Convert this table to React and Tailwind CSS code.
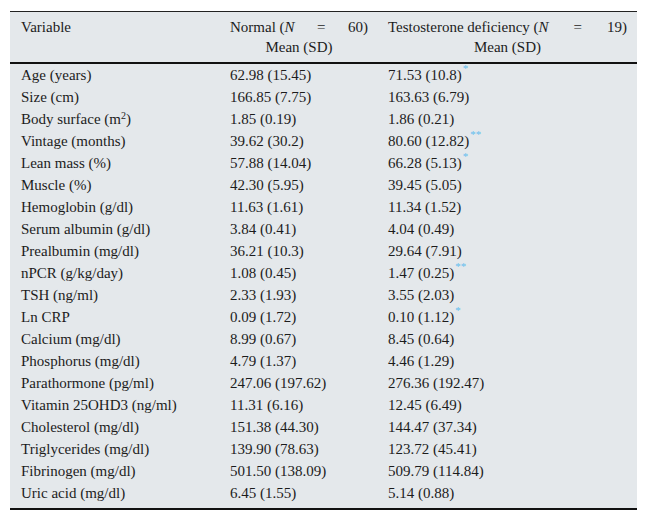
const rows = [
  ["Age (years)", "62.98 (15.45)", "71.53 (10.8)", "*"],
  ["Size (cm)", "166.85 (7.75)", "163.63 (6.79)"],
  [<>Body surface (m<sup className="text-[10px]">2</sup>)</>, "1.85 (0.19)", "1.86 (0.21)"],
  ["Vintage (months)", "39.62 (30.2)", "80.60 (12.82)", "**"],
  ["Lean mass (%)", "57.88 (14.04)", "66.28 (5.13)", "*"],
  ["Muscle (%)", "42.30 (5.95)", "39.45 (5.05)"],
  ["Hemoglobin (g/dl)", "11.63 (1.61)", "11.34 (1.52)"],
  ["Serum albumin (g/dl)", "3.84 (0.41)", "4.04 (0.49)"],
  ["Prealbumin (mg/dl)", "36.21 (10.3)", "29.64 (7.91)"],
  ["nPCR (g/kg/day)", "1.08 (0.45)", "1.47 (0.25)", "**"],
  ["TSH (ng/ml)", "2.33 (1.93)", "3.55 (2.03)"],
  ["Ln CRP", "0.09 (1.72)", "0.10 (1.12)", "*"],
  ["Calcium (mg/dl)", "8.99 (0.67)", "8.45 (0.64)"],
  ["Phosphorus (mg/dl)", "4.79 (1.37)", "4.46 (1.29)"],
  ["Parathormone (pg/ml)", "247.06 (197.62)", "276.36 (192.47)"],
  ["Vitamin 25OHD3 (ng/ml)", "11.31 (6.16)", "12.45 (6.49)"],
  ["Cholesterol (mg/dl)", "151.38 (44.30)", "144.47 (37.34)"],
  ["Triglycerides (mg/dl)", "139.90 (78.63)", "123.72 (45.41)"],
  ["Fibrinogen (mg/dl)", "501.50 (138.09)", "509.79 (114.84)"],
  ["Uric acid (mg/dl)", "6.45 (1.55)", "5.14 (0.88)"],
];

const HeaderGroup = ({ label, n }) => (
  <div className="flex flex-col">
    <div className="flex justify-between">
      <span>
        {label} (<i>N</i>
      </span>
      <span>=</span>
      <span>{n})</span>
    </div>
    <div className="text-center">Mean (SD)</div>
  </div>
);

export default function App() {
  return (
    <div className="w-[648px] h-[521px] bg-white pt-[11px] pl-[10px] font-['Liberation_Serif',serif] text-[15px] text-[#1c1c1c]">
      <div className="w-[627px] bg-[#e4e8eb] border-t border-[#222] border-b-2 border-b-[#111] pb-[4px]">
        {/* HEADER */}
        <div className="grid grid-cols-[209px_159px_259px] border-b-2 border-[#111] pt-[5px] pb-[5px] leading-[20px]">
          <div className="pl-[11px]">Variable</div>
          <div className="pl-[11px] pr-[10px]">
            <HeaderGroup label="Normal" n="60" />
          </div>
          <div className="pl-[10px] pr-[10px]">
            <HeaderGroup label="Testosterone deficiency" n="19" />
          </div>
        </div>

        {/* ROWS */}
        {rows.map(([name, normal, deficit, mark], i) => (
          <div key={i} className="grid grid-cols-[209px_159px_259px] h-[22px] items-center leading-[22px]">
            <div className="pl-[11px] whitespace-nowrap">{name}</div>
            <div className="pl-[11px]">{normal}</div>
            <div className="pl-[10px]">
              {deficit}
              {mark && (
                <span className="relative top-[-8px] ml-[1px] text-[11px] leading-none text-[#62bdee]">{mark}</span>
              )}
            </div>
          </div>
        ))}
      </div>
    </div>
  );
}
